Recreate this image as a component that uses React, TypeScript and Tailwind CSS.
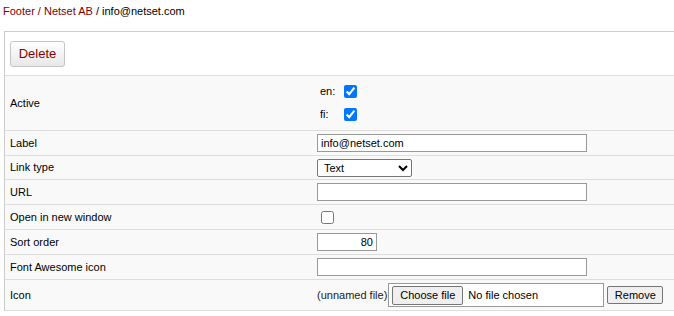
import React from "react";

const rowCls = "flex items-center border-t border-[#dddddd] bg-[#f9f9f9]";
const labelCls = "w-[312px] shrink-0 pl-[5px]";
const inputCls =
  "h-[18px] border border-[#999999] bg-white px-[3px] text-[11px] text-black outline-none";

function Row({ label, h, children }: { label: string; h: string; children?: React.ReactNode }) {
  return (
    <div className={`${rowCls} ${h}`}>
      <div className={labelCls}>{label}</div>
      <div className="flex items-center">{children}</div>
    </div>
  );
}

export default function App() {
  return (
    <main
      className="h-[316px] w-[674px] overflow-hidden bg-white text-[11px] text-black"
      style={{ fontFamily: '"Liberation Sans", Arial, sans-serif' }}
    >
      <div className="px-[3px] pt-[5px] leading-[13px]">
        <span className="text-[#800000]">Footer / Netset AB</span> / info@netset.com
      </div>

      <section className="ml-[4px] mt-[13px] w-[700px] border-l border-t border-[#cccccc]">
        <div className="flex h-[43px] items-center bg-white pl-[5px]">
          <button
            type="button"
            className="h-[26px] w-[55px] rounded-[3px] border border-[#c5c5c5] bg-gradient-to-b from-white to-[#e8e8e8] text-[13px] text-[#8b0000]"
          >
            Delete
          </button>
        </div>

        <div className={`${rowCls} h-[55px]`}>
          <div className={labelCls}>Active</div>
          <div className="flex flex-col gap-[10px] pl-[3px]">
            <label className="flex h-[13px] items-center">
              <span className="w-[24px]">en:</span>
              <input type="checkbox" defaultChecked className="h-[13px] w-[13px]" />
            </label>
            <label className="flex h-[13px] items-center">
              <span className="w-[24px]">fi:</span>
              <input type="checkbox" defaultChecked className="h-[13px] w-[13px]" />
            </label>
          </div>
        </div>

        <Row label="Label" h="h-[25px]">
          <input className={`${inputCls} w-[270px]`} defaultValue="info@netset.com" />
        </Row>
        <Row label="Link type" h="h-[24px]">
          <select className="h-[18px] w-[95px] rounded-[2px] border border-[#767676] bg-white pl-[2px] text-[11px] text-black">
            <option>Text</option>
          </select>
        </Row>
        <Row label="URL" h="h-[25px]">
          <input className={`${inputCls} w-[270px]`} />
        </Row>
        <Row label="Open in new window" h="h-[25px]">
          <input type="checkbox" className="ml-[4px] h-[13px] w-[13px]" />
        </Row>
        <Row label="Sort order" h="h-[25px]">
          <input className={`${inputCls} w-[60px] text-right`} defaultValue="80" />
        </Row>
        <Row label="Font Awesome icon" h="h-[25px]">
          <input className={`${inputCls} w-[270px]`} />
        </Row>
        <div className={`${rowCls} h-[32px] border-b`}>
          <div className={labelCls}>Icon</div>
          <div className="flex items-center">
            <span className="text-[#222222]">(unnamed file)</span>
            <span className="ml-px flex h-[24px] w-[216px] items-center border border-[#999999] bg-white pl-[3px]">
              <span className="flex h-[19px] w-[71px] items-center justify-center rounded-[2px] border border-[#767676] bg-[#efefef]">
                Choose file
              </span>
              <span className="ml-[5px]">No file chosen</span>
            </span>
            <button
              type="button"
              className="ml-[3px] h-[18px] w-[56px] rounded-[2px] border border-[#767676] bg-[#efefef] text-[11px]"
            >
              Remove
            </button>
          </div>
        </div>
      </section>
    </main>
  );
}
